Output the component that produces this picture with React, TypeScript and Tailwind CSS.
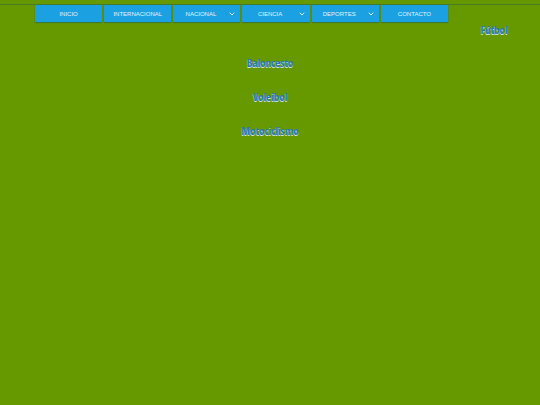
import { ChevronDown } from "lucide-react";

const menu = [
  { label: "INICIO", hasSubmenu: false },
  { label: "INTERNACIONAL", hasSubmenu: false },
  { label: "NACIONAL", hasSubmenu: true },
  { label: "CIENCIA", hasSubmenu: true },
  { label: "DEPORTES", hasSubmenu: true },
  { label: "CONTACTO", hasSubmenu: false },
];

const sports = ["Baloncesto", "Voleibol", "Motociclismo"];

function SportLink({ name }: { name: string }) {
  return (
    <a
      href="#"
      className="font-['Open_Sans_Condensed','Roboto_Condensed',Roboto,sans-serif] text-[11px] leading-4 font-bold text-[#2878b8] [text-shadow:0_1px_0_#d5e2e8]"
    >
      {name}
    </a>
  );
}

export default function App() {
  return (
    <div className="min-h-screen bg-[#669900] pt-1">
      <header className="flex border-t border-[#4a7c22] pl-[35px]">
        <nav className="w-5/6 max-w-[413px]">
          <ul className="grid grid-cols-6 gap-0.5">
            {menu.map(({ label, hasSubmenu }) => (
              <li key={label}>
                <a
                  href="#"
                  className="flex h-[17px] items-center bg-[#1ba1e2] font-['Liberation_Sans',sans-serif] text-[6px] leading-none text-[#e4f4fc] shadow-[0_0_1px_#2f6d5c,0_1px_1px_#3f7d2c]"
                >
                  <span className="flex-1 text-center">{label}</span>
                  {hasSubmenu && (
                    <ChevronDown size={8} strokeWidth={3} className="mr-1" />
                  )}
                </a>
              </li>
            ))}
          </ul>
        </nav>
        <div className="flex flex-1 justify-center pt-[17px]">
          <SportLink name="Fútbol" />
        </div>
      </header>
      <ul className="mt-[17px] flex flex-col items-center gap-[18px]">
        {sports.map((name) => (
          <li key={name} className="flex">
            <SportLink name={name} />
          </li>
        ))}
      </ul>
    </div>
  );
}
